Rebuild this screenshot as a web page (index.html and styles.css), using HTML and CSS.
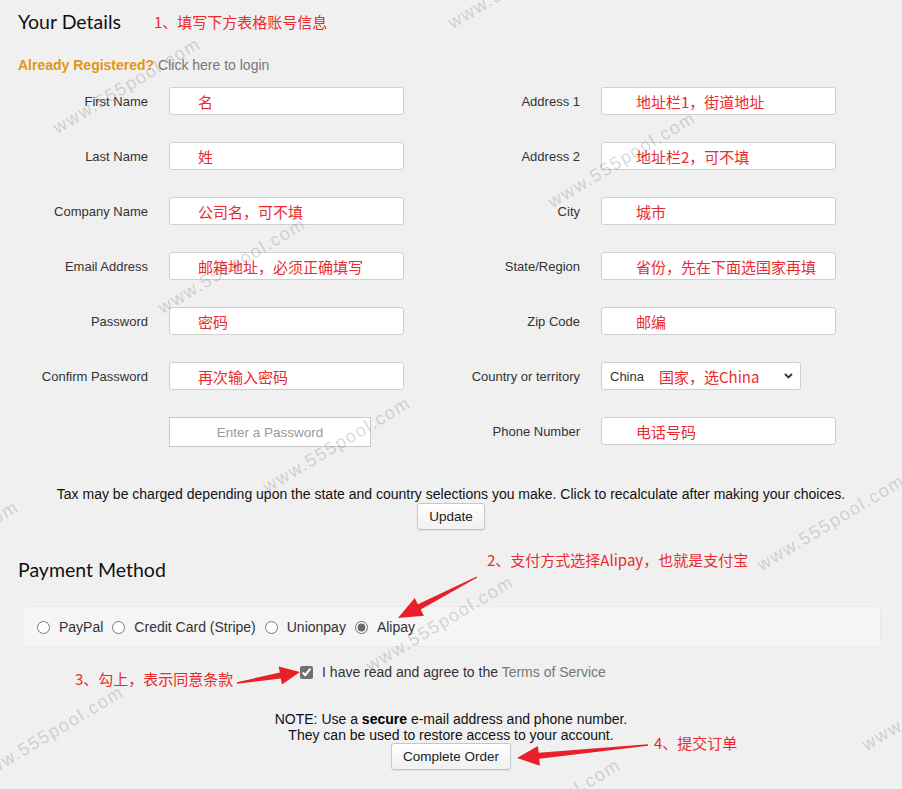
FILE: index.html
```html
<!DOCTYPE html>
<html lang="zh">
<head>
<meta charset="utf-8">
<title>Your Details</title>
<link rel="stylesheet" href="styles.css">
</head>
<body>
<div class="page">
  <div class="head-row">
    <h2 class="section-title">Your Details</h2>
    <span class="note-red">1、填写下方表格账号信息</span>
  </div>
  <p class="login-line"><strong class="already">Already Registered?</strong> <a class="login-link">Click here to login</a></p>

  <div class="form-grid">
    <div class="field"><label class="lbl">First Name</label><input class="txt" value="名"></div>
    <div class="field"><label class="lbl">Address 1</label><input class="txt txt-r" value="地址栏1，街道地址"></div>

    <div class="field"><label class="lbl">Last Name</label><input class="txt" value="姓"></div>
    <div class="field"><label class="lbl">Address 2</label><input class="txt txt-r" value="地址栏2，可不填"></div>

    <div class="field"><label class="lbl">Company Name</label><input class="txt" value="公司名，可不填"></div>
    <div class="field"><label class="lbl">City</label><input class="txt txt-r" value="城市"></div>

    <div class="field"><label class="lbl">Email Address</label><input class="txt" value="邮箱地址，必须正确填写"></div>
    <div class="field"><label class="lbl">State/Region</label><input class="txt txt-r" value="省份，先在下面选国家再填"></div>

    <div class="field"><label class="lbl">Password</label><input class="txt" value="密码"></div>
    <div class="field"><label class="lbl">Zip Code</label><input class="txt txt-r" value="邮编"></div>

    <div class="field"><label class="lbl">Confirm Password</label><input class="txt" value="再次输入密码"></div>
    <div class="field"><label class="lbl">Country or territory</label>
      <div class="select">
        <span class="sel-val">China</span>
        <span class="sel-note">国家，选China</span>
        <svg class="chev" width="9" height="6" viewBox="0 0 9 6"><path d="M1 1 L4.5 4.5 L8 1" fill="none" stroke="#333" stroke-width="1.8"/></svg>
      </div>
    </div>

    <div class="field"><span class="lbl"></span><input class="pw" placeholder="Enter a Password"></div>
    <div class="field"><label class="lbl">Phone Number</label><input class="txt txt-r" value="电话号码"></div>
  </div>

  <p class="tax">Tax may be charged depending upon the state and country selections you make. Click to recalculate after making your choices.</p>
  <div class="center"><button class="btn">Update</button></div>

  <h2 class="section-title pay-title">Payment Method</h2>
  <div class="pay-box">
    <label class="opt"><input type="radio" name="pm"> PayPal</label>
    <label class="opt"><input type="radio" name="pm"> Credit Card (Stripe)</label>
    <label class="opt"><input type="radio" name="pm"> Unionpay</label>
    <label class="opt"><input type="radio" name="pm" checked> Alipay</label>
  </div>

  <div class="agree">
    <input type="checkbox" checked>
    <span>I have read and agree to the <a class="tos">Terms of Service</a></span>
  </div>

  <p class="note">NOTE: Use a <strong>secure</strong> e-mail address and phone number.<br>They can be used to restore access to your account.</p>
  <div class="center"><button class="btn">Complete Order</button></div>
</div>

<div class="overlay">
  <span class="wm" style="left:127px;top:86px">www.555pool.com</span>
  <span class="wm" style="left:522px;top:-19px">www.555pool.com</span>
  <span class="wm" style="left:622px;top:160px">www.555pool.com</span>
  <span class="wm" style="left:232px;top:266px">www.555pool.com</span>
  <span class="wm" style="left:337px;top:445px">www.555pool.com</span>
  <span class="wm" style="left:-55px;top:549px">www.555pool.com</span>
  <span class="wm" style="left:831px;top:523px">www.555pool.com</span>
  <span class="wm" style="left:440px;top:624px">www.555pool.com</span>
  <span class="wm" style="left:50px;top:734px">www.555pool.com</span>
  <span class="wm" style="left:936px;top:703px">www.555pool.com</span>
  <span class="wm" style="left:547px;top:807px">www.555pool.com</span>

  <span class="ann ann-2">2、支付方式选择Alipay，也就是支付宝</span>
  <span class="ann ann-3">3、勾上，表示同意条款</span>
  <span class="ann ann-4">4、提交订单</span>

  <svg class="arrows" width="902" height="789" viewBox="0 0 902 789">
    <polygon fill="#e8202a" points="476.7,576.4 417.9,604.2 414.7,598.0 398,618 423.9,615.8 420.7,609.6 477.3,577.6"/>
    <polygon fill="#e8202a" points="236.9,682.2 279.8,672.5 278.7,666.6 300,672 281.9,684.4 280.8,678.5 237.1,683.8"/>
    <polygon fill="#e8202a" points="647.9,744.2 538.6,752.8 537.9,745.9 517,758 539.9,765.7 539.2,758.8 648.1,745.8"/>
  </svg>
</div>
</body>
</html>
```

FILE: styles.css
```css
html, body {
  margin: 0;
  padding: 0;
}

body {
  position: relative;
  width: 902px;
  height: 789px;
  overflow: hidden;
  background: #f0f0f0;
  font-family: "Liberation Sans", Arial, sans-serif;
  font-size: 14px;
  color: #333;
}

.page {
  padding: 0 18px;
}

.head-row {
  display: flex;
  align-items: center;
  gap: 33px;
  margin-top: 10px;
  height: 24px;
}

.section-title {
  margin: 0;
  font-family: Lato, "Open Sans", sans-serif;
  font-weight: 400;
  font-size: 19.5px;
  line-height: 24px;
  color: #111;
}

.note-red,
.ann {
  font-family: "Noto Sans CJK SC", sans-serif;
  font-size: 15px;
  line-height: 20px;
  color: #ea2a2f;
  white-space: nowrap;
}

.login-line {
  margin: 21px 0 0;
  line-height: 20px;
  font-size: 14px;
}

.already {
  color: #e3960f;
}

.login-link {
  color: #777;
}

.form-grid {
  display: grid;
  grid-template-columns: 432px 432px;
  row-gap: 27px;
  align-items: start;
  margin-top: 12px;
}

.field {
  display: grid;
  grid-template-columns: 130px auto;
  column-gap: 21px;
  align-items: center;
}

.lbl {
  text-align: right;
  font-size: 13px;
  color: #333;
}

.txt {
  box-sizing: border-box;
  width: 235px;
  height: 28px;
  margin: 0;
  padding: 0 0 0 28px;
  border: 1px solid #cfcfcf;
  border-radius: 3px;
  background: #fff;
  font-family: "Noto Sans CJK SC", sans-serif;
  font-size: 15px;
  color: #ea2a2f;
  outline: none;
}

.txt-r {
  padding-left: 34px;
}

.pw {
  box-sizing: border-box;
  width: 202px;
  height: 30px;
  margin: 0;
  padding: 0;
  border: 1px solid #c8c8c8;
  border-radius: 0;
  background: #fff;
  text-align: center;
  font-family: "Liberation Sans", Arial, sans-serif;
  font-size: 13.5px;
}

.pw::placeholder {
  color: #999;
}

.select {
  box-sizing: border-box;
  width: 200px;
  height: 28px;
  display: flex;
  align-items: center;
  padding: 0 7px 0 8px;
  border: 1px solid #cfcfcf;
  border-radius: 3px;
  background: #fff;
}

.sel-val {
  font-size: 13px;
  color: #333;
}

.sel-note {
  margin-left: 15px;
  font-family: "Noto Sans CJK SC", sans-serif;
  font-size: 15px;
  color: #ea2a2f;
}

.chev {
  margin-left: auto;
}

.tax {
  margin: 38px 0 0;
  text-align: center;
  font-size: 14px;
  line-height: 18px;
  color: #111;
}

.center {
  display: flex;
  justify-content: center;
}

.btn {
  box-sizing: border-box;
  height: 27px;
  margin: 0;
  padding: 0 11px;
  border: 1px solid #c6c6c6;
  border-radius: 3px;
  background: linear-gradient(#ffffff, #f1f1f1);
  box-shadow: 0 1px 1px rgba(0, 0, 0, 0.08);
  font-family: "Liberation Sans", Arial, sans-serif;
  font-size: 13.5px;
  color: #222;
}

.pay-title {
  margin-top: 28px;
}

.pay-box {
  box-sizing: border-box;
  height: 41px;
  margin: 24px 3px 0 4px;
  padding: 0 14px;
  display: flex;
  align-items: center;
  gap: 9px;
  border: 1px solid #e9e9e9;
  border-radius: 4px;
  background: #f5f5f5;
}

.opt {
  display: flex;
  align-items: center;
  gap: 9px;
  font-size: 14px;
  color: #333;
}

.opt input {
  width: 13px;
  height: 13px;
  margin: 2px 0 0;
  accent-color: #6b6b6b;
}

.agree {
  display: flex;
  justify-content: center;
  align-items: center;
  gap: 9px;
  margin-top: 16px;
  padding-left: 4px;
  line-height: 18px;
  font-size: 14px;
  color: #333;
}

.agree input {
  width: 13px;
  height: 13px;
  margin: 0;
  accent-color: #707070;
}

.tos {
  color: #777;
}

.note {
  margin: 30px 0 0;
  text-align: center;
  font-size: 14px;
  line-height: 16px;
  color: #111;
}

.note strong {
  color: #000;
}

.overlay {
  position: absolute;
  left: 0;
  top: 0;
  width: 902px;
  height: 789px;
  overflow: hidden;
  pointer-events: none;
}

.wm {
  position: absolute;
  transform: translate(-50%, -50%) rotate(-31deg);
  font-family: "Liberation Sans", Arial, sans-serif;
  font-size: 18px;
  letter-spacing: 1.5px;
  color: rgba(90, 90, 90, 0.24);
  white-space: nowrap;
}

.ann {
  position: absolute;
}

.ann-2 { left: 487px; top: 550px; }
.ann-3 { left: 75px; top: 669px; }
.ann-4 { left: 654px; top: 733px; }

.arrows {
  position: absolute;
  left: 0;
  top: 0;
}
```
